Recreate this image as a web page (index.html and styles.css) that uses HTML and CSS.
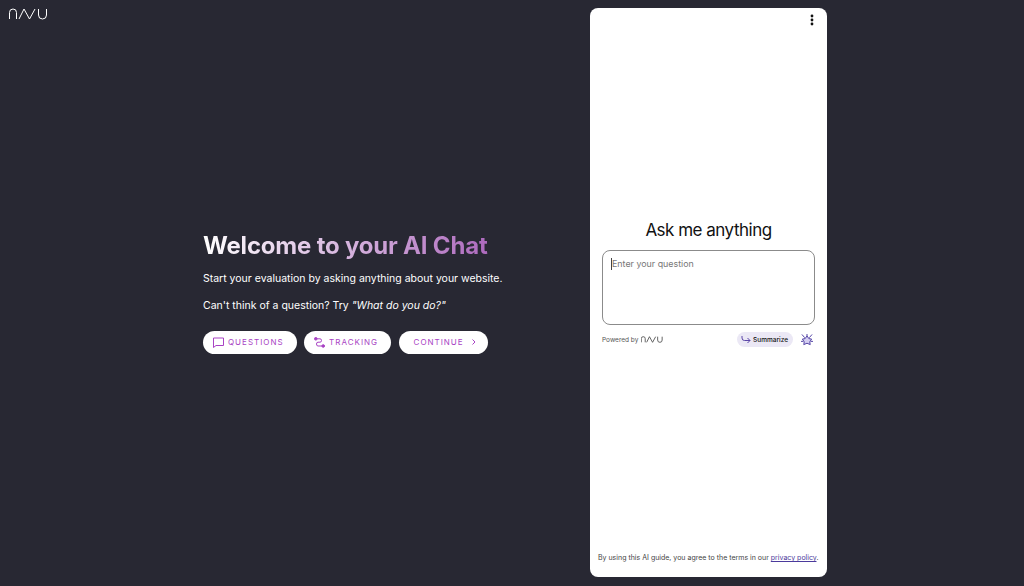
FILE: index.html
```html
<!DOCTYPE html>
<html>
  <head>
    <title>Welcome to your AI Chat</title>
    <link rel="stylesheet" href="styles.css">
  </head>
  <body>
    <div class="page">
      <section class="intro">
        <svg class="logo" width="39" height="12" viewBox="0 0 39 12" fill="none" stroke="currentColor" stroke-width="1">
          <path d="M0.500 11V4.500Q0.500 1 4 1Q7.500 1 7.500 4.500V11M10 11L15 1L20.500 11L26 1M29.500 1V7Q29.500 11 33.500 11Q37.500 11 37.500 7V1"/>
        </svg>
        <div class="intro-body">
          <h1>Welcome to your AI Chat</h1>
          <p>Start your evaluation by asking anything about your website.</p>
          <p>Can't think of a question? Try <em>"What do you do?"</em></p>
          <div class="actions">
            <button class="pill">
              <svg width="11" height="11" viewBox="0 0 11 11" fill="none" stroke="currentColor" stroke-width="1">
                <path d="M0.500 1H10.500V8.500H3L0.500 10.500Z"/>
              </svg>
              QUESTIONS
            </button>
            <button class="pill">
              <svg width="11" height="11" viewBox="0 0 11 11" fill="none" stroke="currentColor" stroke-width="1">
                <circle cx="1.800" cy="1.800" r="1.300" fill="currentColor"/>
                <circle cx="9.200" cy="9" r="1.300" fill="currentColor"/>
                <path d="M3 1.800H6Q7.500 1.800 7.500 3.500Q7.500 5.200 6 5.200H4Q2.500 5.200 2.500 7Q2.500 9 4 9H8"/>
              </svg>
              TRACKING
            </button>
            <button class="pill pill-next">
              CONTINUE
              <svg width="10" height="10" viewBox="0 0 10 10" fill="none" stroke="currentColor" stroke-width="1">
                <path d="M3.500 2.500L6 5L3.500 7.500"/>
              </svg>
            </button>
          </div>
        </div>
      </section>

      <aside class="chat">
        <div class="chat-top">
          <svg width="4" height="12" viewBox="0 0 4 12" fill="#111">
            <circle cx="2" cy="2" r="1.400"/>
            <circle cx="2" cy="6" r="1.400"/>
            <circle cx="2" cy="10" r="1.400"/>
          </svg>
        </div>
        <div class="chat-main">
          <h2>Ask me anything</h2>
          <div class="question">
            <span class="caret"></span><span class="placeholder">Enter your question</span>
          </div>
          <div class="chat-tools">
            <span class="powered">
              Powered by
              <svg width="22" height="7" viewBox="0 0 39 12" fill="none" stroke="currentColor" stroke-width="1.600">
                <path d="M0.500 11V4.500Q0.500 1 4 1Q7.500 1 7.500 4.500V11M10 11L15 1L20.500 11L26 1M29.500 1V7Q29.500 11 33.500 11Q37.500 11 37.500 7V1"/>
              </svg>
            </span>
            <span class="summarize">
              <svg width="10" height="9" viewBox="0 0 10 9" fill="none" stroke="#5b46a8" stroke-width="1">
                <path d="M1 1V3Q1 5.500 3.500 5.500H9M6.500 3L9 5.500L6.500 8"/>
              </svg>
              Summarize
            </span>
            <svg class="spark" width="12" height="12" viewBox="0 0 13 13" fill="none" stroke="#4a3aa0" stroke-width="1">
              <path d="M6.500 2L8.500 5L11.500 5.500L9.500 8.500L10 11.500L6.500 10L3 11.500L3.500 8.500L1.500 5.500L4.500 5Z" fill="#d5cff2"/>
              <path d="M1 0.500L4 4M12 0.500L9 4M0 8H2.500M13 8H10.500M6.500 0V2"/>
            </svg>
          </div>
        </div>
        <p class="terms">By using this AI guide, you agree to the terms in our <a href="#">privacy policy</a>.</p>
      </aside>
    </div>
  </body>
</html>
```

FILE: styles.css
```css
* {
  margin: 0;
  padding: 0;
  box-sizing: border-box;
}

html,
body {
  height: 100%;
  overflow: hidden;
}

body {
  background-color: #282833;
  color: #fff;
  font-family: Inter, "Liberation Sans", sans-serif;
}

.page {
  display: flex;
  height: 100%;
  padding: 8px 197px 9px 0;
}

.intro {
  flex: 1;
  display: flex;
  flex-direction: column;
  position: relative;
}

.logo {
  position: absolute;
  top: 0;
  left: 9px;
  color: #fff;
}

.intro-body {
  margin: auto 0;
  padding: 0 0 1px 203px;
}

h1 {
  font-size: 24px;
  line-height: 30px;
  font-weight: 700;
  letter-spacing: -0.2px;
  width: 286px;
  white-space: nowrap;
  background: linear-gradient(90deg, #fff 0%, #ad69bd 100%);
  -webkit-background-clip: text;
  background-clip: text;
  color: transparent;
  margin-bottom: 9px;
}

.intro-body p {
  font-size: 10.500px;
  line-height: 18px;
  margin-bottom: 9px;
}

.actions {
  display: flex;
  gap: 7.500px;
  margin-top: 16px;
}

.pill {
  display: flex;
  align-items: center;
  gap: 4px;
  height: 23px;
  padding: 0 13px 0 10px;
  border: none;
  border-radius: 12px;
  background-color: #fff;
  color: #a843c4;
  font-family: inherit;
  font-size: 8px;
  font-weight: 400;
  letter-spacing: 1px;
}

.pill-next {
  padding: 0 9px 0 15px;
  gap: 5px;
}

.chat {
  width: 237px;
  display: flex;
  flex-direction: column;
  background-color: #fff;
  border-radius: 8px;
  color: #111;
}

.chat-top {
  display: flex;
  justify-content: flex-end;
  padding: 6px 13px 0 0;
}

.chat-main {
  margin-top: 192px;
  padding: 0 12px;
  flex: 1;
}

h2 {
  font-size: 17px;
  line-height: 24px;
  font-weight: 400;
  letter-spacing: -0.5px;
  text-align: center;
  margin-bottom: 8px;
}

.question {
  height: 75px;
  padding: 7px 8px;
  border: 1px solid #8b8b8b;
  border-radius: 8px;
  font-size: 8.900px;
  line-height: 12px;
  display: flex;
}

.caret {
  width: 1px;
  height: 12px;
  background-color: #444;
}

.placeholder {
  color: #777;
}

.chat-tools {
  display: flex;
  align-items: center;
  margin-top: 7px;
}

.powered {
  display: flex;
  align-items: center;
  gap: 3px;
  font-size: 6.500px;
  color: #555;
  flex: 1;
}

.summarize {
  display: flex;
  align-items: center;
  gap: 2px;
  height: 15px;
  padding: 0 5px 0 4px;
  border-radius: 8px;
  background-color: #ebe8f5;
  font-size: 6.500px;
  font-weight: 500;
}

.spark {
  margin: 0 2px 0 8px;
}

.terms {
  font-size: 7px;
  line-height: 10px;
  color: #444;
  padding: 0 0 14px 8px;
}

.terms a {
  color: #4b3a9c;
}
```
